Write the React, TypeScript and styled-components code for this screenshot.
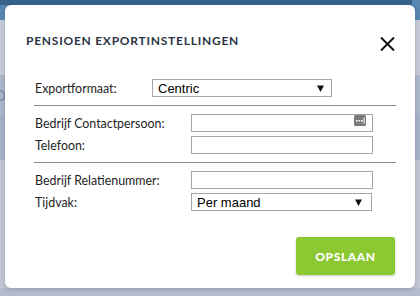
import styled, { createGlobalStyle } from "styled-components";

const GlobalStyle = createGlobalStyle`
  html, body {
    margin: 0;
    padding: 0;
  }
  body {
    width: 420px;
    height: 296px;
    overflow: hidden;
    background: #c3c8d4;
  }
`;

const LABEL_FONT = `"Lato", "Open Sans", sans-serif`;
const FIELD_FONT = `"Liberation Sans", Arial, sans-serif`;

const ChevronDown = () => (
  <svg width="7" height="7" viewBox="0 0 7 7">
    <path d="M0 0.5 H7 L3.5 7 Z" fill="#111" />
  </svg>
);

const KeyIcon = () => (
  <svg width="12" height="11" viewBox="0 0 12 11">
    <rect x="0" y="0" width="12" height="11" rx="1.5" fill="#7b7b7b" />
    <rect x="2" y="5" width="1.6" height="1.6" fill="#fff" />
    <rect x="4.6" y="5" width="1.6" height="1.6" fill="#fff" />
    <rect x="7.2" y="5" width="1.6" height="1.6" fill="#fff" />
    <rect x="9.6" y="2.5" width="1" height="6" fill="#fff" />
  </svg>
);

const CloseIcon = () => (
  <svg width="15" height="14" viewBox="0 0 15 14">
    <path
      d="M1 0.5 L14 13.5 M14 0.5 L1 13.5"
      stroke="#111"
      strokeWidth="2"
      fill="none"
    />
  </svg>
);

const App = () => {
  return (
    <>
      <GlobalStyle />
      <Page>
        <TopBar>
          <TopBarDark />
        </TopBar>
        <BackdropBand $color="#c6cbd7" $height={55} />
        <BackdropBand $color="#aeb8cb" $height={40}>
          <GhostText>O</GhostText>
        </BackdropBand>
        <BackdropBand $color="#a6b2c7" $height={45} />
        <BackdropBand $color="#c2c7d3" $height={128} />
        <BackdropBand $color="#b3bccd" $height={8} />

        <Modal>
          <Header>
            <Title>PENSIOEN EXPORTINSTELLINGEN</Title>
            <CloseButton aria-label="Sluiten">
              <CloseIcon />
            </CloseButton>
          </Header>

          <Body>
            <Section $labelWidth={117} $first>
              <Label>Exportformaat:</Label>
              <SelectBox $width={180} $arrowGap={7}>
                <span>Centric</span>
                <ChevronDown />
              </SelectBox>
            </Section>

            <Section $labelWidth={156}>
              <Label>Bedrijf Contactpersoon:</Label>
              <FieldWrap>
                <TextInput />
                <InputBadge>
                  <KeyIcon />
                </InputBadge>
              </FieldWrap>
              <Label>Telefoon:</Label>
              <TextInput />
            </Section>

            <Section $labelWidth={156} $last>
              <Label>Bedrijf Relatienummer:</Label>
              <TextInput />
              <Label>Tijdvak:</Label>
              <SelectBox $width={181} $arrowGap={9}>
                <span>Per maand</span>
                <ChevronDown />
              </SelectBox>
            </Section>
          </Body>

          <Footer>
            <SaveButton>OPSLAAN</SaveButton>
          </Footer>
        </Modal>
      </Page>
    </>
  );
};

export default App;

const Page = styled.div`
  position: relative;
  width: 420px;
  height: 296px;
  display: flex;
  flex-direction: column;
  overflow: hidden;
`;

const TopBar = styled.div`
  height: 20px;
  background: #5886b3;
  display: flex;
`;

const TopBarDark = styled.div`
  width: 412px;
  height: 5px;
  background: #37638d;
`;

const BackdropBand = styled.div<{ $color: string; $height: number }>`
  height: ${({ $height }) => $height}px;
  background: ${({ $color }) => $color};
  display: flex;
  align-items: center;
`;

const GhostText = styled.span`
  font-family: ${LABEL_FONT};
  font-size: 15px;
  color: #7b8aa3;
  margin-left: -6px;
`;

const Modal = styled.div`
  position: absolute;
  left: 5px;
  top: 5px;
  width: 410px;
  height: 283px;
  background: #fff;
  border-radius: 6px;
  box-shadow: 0 1px 4px rgba(40, 50, 70, 0.25);
  display: flex;
  flex-direction: column;
`;

const Header = styled.div`
  display: flex;
  align-items: center;
  justify-content: space-between;
  height: 16px;
  margin-top: 28px;
  padding: 0 20px 0 21px;
`;

const Title = styled.h2`
  margin: 0;
  font-family: ${LABEL_FONT};
  font-weight: 700;
  font-size: 12px;
  line-height: 16px;
  letter-spacing: 0.75px;
  color: #2b3545;
`;

const CloseButton = styled.button`
  border: 0;
  padding: 0;
  background: none;
  display: flex;
  margin-top: 6px;
  cursor: pointer;
`;

const Body = styled.div`
  margin: 30px 19px 0 29px;
  display: flex;
  flex-direction: column;
`;

const Section = styled.div<{
  $labelWidth: number;
  $first?: boolean;
  $last?: boolean;
}>`
  display: grid;
  grid-template-columns: ${({ $labelWidth }) => $labelWidth}px auto;
  grid-auto-rows: 18px;
  row-gap: 4px;
  align-items: center;
  justify-items: start;
  padding: ${({ $first }) => ($first ? 0 : 8)}px 0
    ${({ $last }) => ($last ? 0 : 8)}px 1px;
  border-bottom: ${({ $last }) => ($last ? "none" : "1px solid #8c8c8c")};
`;

const Label = styled.label`
  font-family: ${LABEL_FONT};
  font-size: 12.4px;
  color: #1e1e1e;
`;

const SelectBox = styled.div<{ $width: number; $arrowGap: number }>`
  box-sizing: border-box;
  width: ${({ $width }) => $width}px;
  height: 18px;
  border: 1px solid #a6a6a6;
  display: flex;
  align-items: center;
  justify-content: space-between;
  padding: 0 ${({ $arrowGap }) => $arrowGap}px 0 5px;
  font-family: ${FIELD_FONT};
  font-size: 13px;
  color: #000;
`;

const FieldWrap = styled.div`
  position: relative;
  display: flex;
`;

const TextInput = styled.input.attrs({ type: "text" })`
  box-sizing: border-box;
  width: 182px;
  height: 18px;
  margin: 0;
  border: 1px solid #a6a6a6;
  border-radius: 0;
  padding: 0 4px;
  font-family: ${FIELD_FONT};
  font-size: 13px;
  outline: none;
`;

const InputBadge = styled.span`
  position: absolute;
  right: 7px;
  top: 1px;
  display: flex;
`;

const Footer = styled.div`
  display: flex;
  justify-content: flex-end;
  margin-top: 26px;
  padding-right: 20px;
`;

const SaveButton = styled.button`
  width: 99px;
  height: 38px;
  border: 0;
  border-radius: 3px;
  background: #8cc832;
  box-shadow: 0 1px 3px rgba(0, 0, 0, 0.2);
  color: #fff;
  font-family: ${LABEL_FONT};
  font-weight: 900;
  font-size: 12px;
  letter-spacing: 0.6px;
  cursor: pointer;
`;
